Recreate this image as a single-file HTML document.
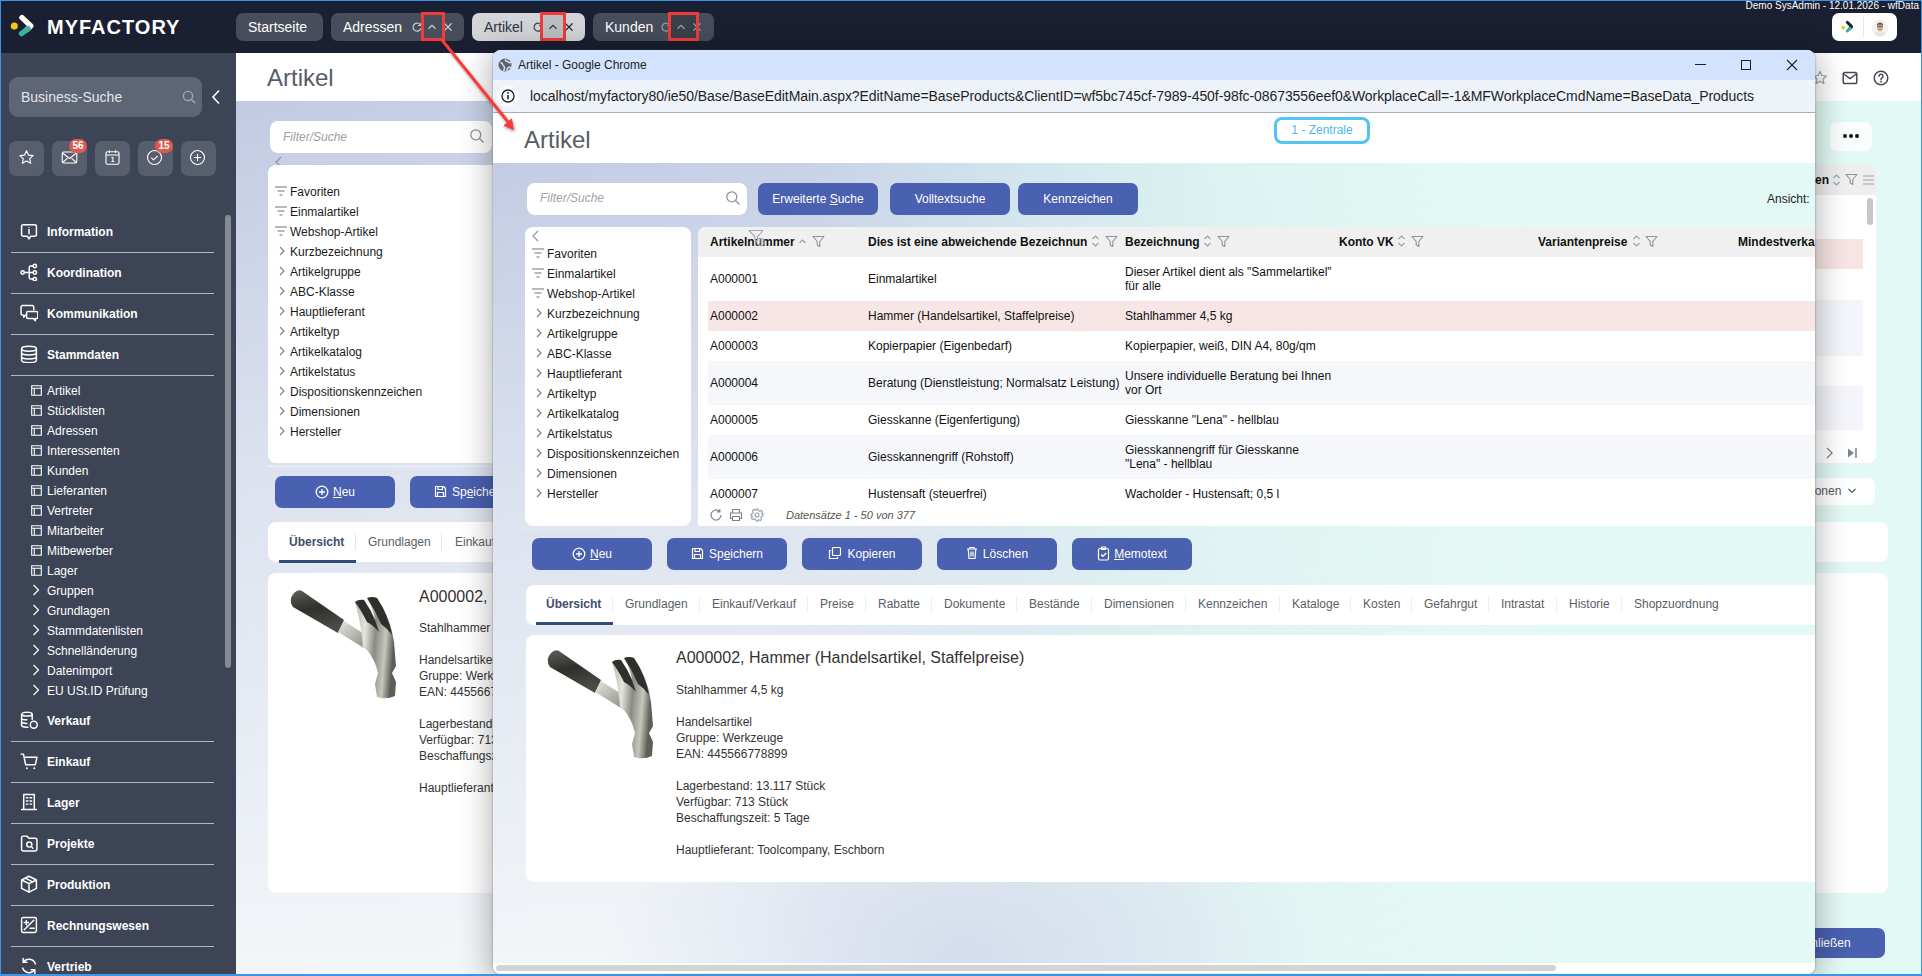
<!DOCTYPE html>
<html><head><meta charset="utf-8">
<style>
*{box-sizing:border-box;margin:0;padding:0}
html,body{width:1922px;height:976px;overflow:hidden;background:#fff}
body{position:relative;font-family:"Liberation Sans",sans-serif;font-size:12px;color:#222}
.a{position:absolute}
.nw{white-space:nowrap}
/* top header */
#hdr{left:0;top:0;width:1922px;height:53px;background:#1a2031}
.tab{position:absolute;top:13px;height:28px;border-radius:7px;background:#474d5b;color:#fff;font-size:14px;line-height:28px}
.redbox{position:absolute;border:3px solid #ef3b3b}
/* sidebar */
#side{left:0;top:53px;width:236px;height:923px;background:#3c4455}
.navh{position:absolute;left:47px;color:#fff;font-weight:bold;font-size:12px}
.sep{position:absolute;left:11px;width:203px;height:1px;background:#b3b7bf}
.sub{position:absolute;left:47px;color:#fff;font-size:12px}
/* background app */
#bg{left:236px;top:53px;width:1686px;height:923px;overflow:hidden;background:linear-gradient(90deg,#c3cce3 0%,#cdd8e8 40%,#d9f0ef 75%,#e1f8f3 100%)}
.panel{position:absolute;background:#fff;border-radius:8px}
.btn{position:absolute;height:32px;width:120px;border-radius:7px;background:#4a60b0;color:#fff;font-size:12px;line-height:32px;text-align:center}
/* popup */
#pop{left:493px;top:50px;width:1322px;height:924px;background:#fff;border-radius:8px 8px 8px 8px;overflow:hidden;box-shadow:0 0 2px 0 rgba(60,64,70,.6),0 4px 30px 3px rgba(0,0,0,.3)}
</style></head><body>

<div id="hdr" class="a">
 <svg class="a" style="left:8px;top:12px" width="30" height="30" viewBox="0 0 30 30">
  <circle cx="6.3" cy="14" r="3.5" fill="#f5c518"/>
  <path d="M14 5.6 L22.8 14 L19 17.4" stroke="#fff" stroke-width="5.4" stroke-linecap="round" stroke-linejoin="round" fill="none"/>
  <path d="M20 16.6 L13.6 21.6" stroke="#3bb0a4" stroke-width="5.4" stroke-linecap="round" fill="none"/>
 </svg>
 <div class="a nw" style="left:47px;top:15px;font-size:20px;font-weight:bold;color:#fff;letter-spacing:1.0px;line-height:24px">MYFACTORY</div>
 <div class="tab" style="left:236px;width:87px;padding-left:12px">Startseite</div>
 <div class="tab" style="left:331px;width:133px;padding-left:12px">Adressen</div>
 <div class="tab" style="left:472px;width:113px;padding-left:12px;background:#d3d4d8;color:#2e3442">Artikel</div>
 <div class="tab" style="left:593px;width:121px;padding-left:12px">Kunden</div>
 <div class="a" style="left:540px;top:12px;width:25px;height:28px;background:rgba(0,0,0,.1)"></div>
 <div class="a" style="left:668px;top:12px;width:31px;height:28px;background:rgba(0,0,0,.18)"></div>
 <svg class="a" style="left:411px;top:21px" width="12" height="12" viewBox="0 0 12 12"><path d="M9.6 4.3A4 4 0 1 0 9.9 7.3" stroke="#c8cbd1" stroke-width="1.2" fill="none"/><path d="M10 1.6v2.9H7.1" stroke="#c8cbd1" stroke-width="1.2" fill="none"/></svg>
 <svg class="a" style="left:426px;top:21px" width="12" height="12" viewBox="0 0 12 12"><path d="M2.5 7.8L6 4.3l3.5 3.5" stroke="#c8cbd1" stroke-width="1.3" fill="none"/></svg>
 <svg class="a" style="left:442px;top:21px" width="12" height="12" viewBox="0 0 12 12"><path d="M2.4 2.4l7.2 7.2M9.6 2.4l-7.2 7.2" stroke="#d5d8dd" stroke-width="1.3"/></svg>

 <svg class="a" style="left:532px;top:21px" width="12" height="12" viewBox="0 0 12 12"><path d="M9.6 4.3A4 4 0 1 0 9.9 7.3" stroke="#3a3f4a" stroke-width="1.2" fill="none"/><path d="M10 1.6v2.9H7.1" stroke="#3a3f4a" stroke-width="1.2" fill="none"/></svg>
 <svg class="a" style="left:547px;top:21px" width="12" height="12" viewBox="0 0 12 12"><path d="M2.5 7.8L6 4.3l3.5 3.5" stroke="#3a3f4a" stroke-width="1.3" fill="none"/></svg>
 <svg class="a" style="left:563px;top:21px" width="12" height="12" viewBox="0 0 12 12"><path d="M2.4 2.4l7.2 7.2M9.6 2.4l-7.2 7.2" stroke="#1c1f26" stroke-width="1.3"/></svg>

 <svg class="a" style="left:660px;top:21px" width="12" height="12" viewBox="0 0 12 12"><path d="M9.6 4.3A4 4 0 1 0 9.9 7.3" stroke="#9aa0a9" stroke-width="1.2" fill="none"/><path d="M10 1.6v2.9H7.1" stroke="#9aa0a9" stroke-width="1.2" fill="none"/></svg>
 <svg class="a" style="left:675px;top:21px" width="12" height="12" viewBox="0 0 12 12"><path d="M2.5 7.8L6 4.3l3.5 3.5" stroke="#9aa0a9" stroke-width="1.3" fill="none"/></svg>
 <svg class="a" style="left:691px;top:21px" width="12" height="12" viewBox="0 0 12 12"><path d="M2.4 2.4l7.2 7.2M9.6 2.4l-7.2 7.2" stroke="#9aa0a9" stroke-width="1.3"/></svg>
 <div class="redbox" style="left:421px;top:12px;width:24px;height:29px"></div>
 <div class="redbox" style="left:540px;top:12px;width:26px;height:29px"></div>
 <div class="redbox" style="left:668px;top:12px;width:31px;height:29px"></div>
 <div class="a nw" style="right:3px;top:0px;font-size:10px;color:#fff;line-height:12px">Demo SysAdmin - 12.01.2026 - wfData</div>
 <div class="a" style="left:1832px;top:13px;width:65px;height:28px;background:#fff;border-radius:7px"></div>
 <div class="a" style="left:1863px;top:17px;width:1px;height:20px;background:#e4e4e4"></div>
 <svg class="a" style="left:1840px;top:19px" width="16" height="16" viewBox="0 0 16 16">
  <circle cx="3.2" cy="8.6" r="1.9" fill="#f5c518"/>
  <path d="M7.3 3.3 L11.6 7.6 L9.6 9.6" stroke="#1a2031" stroke-width="3" stroke-linecap="round" stroke-linejoin="round" fill="none"/>
  <path d="M10 9.3 L7.3 11.9" stroke="#3bb0a4" stroke-width="3" stroke-linecap="round" fill="none"/>
 </svg>
 <svg class="a" style="left:1871px;top:19px" width="18" height="18" viewBox="0 0 18 18">
  <circle cx="9" cy="9" r="8.5" fill="#f3f3f2"/>
  <path d="M3.5 15.5 Q4.5 12 9 12 Q13.5 12 14.5 15.5 Q12 17.6 9 17.6 Q6 17.6 3.5 15.5Z" fill="#e8e4e0"/>
  <ellipse cx="9" cy="8" rx="3" ry="3.9" fill="#c9a08a"/>
  <path d="M5.9 6.6 Q6 3.4 9 3.5 Q12 3.4 12.1 6.6 Q10.6 5.2 9 5.4 Q7.4 5.2 5.9 6.6Z" fill="#6e5a4c"/>
  <path d="M6.2 7.3h5.6" stroke="#4a4038" stroke-width=".7"/>
 </svg>
</div>
<div id="side" class="a">
<div class="a" style="left:9px;top:24px;width:193px;height:40px;border-radius:9px;background:#5e6575"></div>
<div class="a nw" style="left:21px;top:35px;font-size:14px;color:#e3e5ea;line-height:18px">Business-Suche</div>
<svg class="a" style="left:182px;top:37px" width="14" height="14" viewBox="0 0 14 14"><circle cx="6" cy="6" r="4.6" stroke="#a5aab3" stroke-width="1.3" fill="none"/><path d="M9.4 9.4l3.6 3.6" stroke="#a5aab3" stroke-width="1.3"/></svg>
<svg class="a" style="left:210px;top:36px" width="12" height="16" viewBox="0 0 12 16"><path d="M9 1.5L3 8l6 6.5" stroke="#fff" stroke-width="1.6" fill="none"/></svg>
<div class="a" style="left:9px;top:88px;width:35px;height:35px;border-radius:7px;background:#575e6d"></div>
<div class="a" style="left:52px;top:88px;width:35px;height:35px;border-radius:7px;background:#575e6d"></div>
<div class="a" style="left:95px;top:88px;width:35px;height:35px;border-radius:7px;background:#575e6d"></div>
<div class="a" style="left:138px;top:88px;width:35px;height:35px;border-radius:7px;background:#575e6d"></div>
<div class="a" style="left:181px;top:88px;width:35px;height:35px;border-radius:7px;background:#575e6d"></div>
<svg class="a" style="left:18px;top:96px" width="17" height="17" viewBox="0 0 17 17"><path d="M8.5 1.8l2 4.3 4.6.5-3.4 3.1 1 4.6-4.2-2.4-4.2 2.4 1-4.6-3.4-3.1 4.6-.5z" stroke="#fff" stroke-width="1.1" fill="none" stroke-linejoin="round"/></svg>
<svg class="a" style="left:61px;top:97px" width="17" height="15" viewBox="0 0 17 15"><rect x="1.2" y="2" width="14.6" height="11" rx="1.5" stroke="#fff" stroke-width="1.1" fill="none" stroke-linejoin="round"/><path d="M1.5 3l7 5.5 7-5.5M1.5 12.5l5-4.2M15.5 12.5l-5-4.2" stroke="#fff" stroke-width="1.1" fill="none" stroke-linejoin="round"/></svg>
<svg class="a" style="left:104px;top:96px" width="17" height="17" viewBox="0 0 17 17"><rect x="2" y="2.8" width="13" height="12.5" rx="1.5" stroke="#fff" stroke-width="1.1" fill="none" stroke-linejoin="round"/><path d="M2 6h13M5.5 1.2v2.8M11.5 1.2v2.8" stroke="#fff" stroke-width="1.1" fill="none" stroke-linejoin="round"/><text x="8.5" y="13.3" font-size="6.5" font-family="Liberation Sans" font-weight="bold" fill="#fff" text-anchor="middle">1</text></svg>
<svg class="a" style="left:146px;top:96px" width="17" height="17" viewBox="0 0 17 17"><circle cx="8.5" cy="8.5" r="7" stroke="#fff" stroke-width="1.1" fill="none" stroke-linejoin="round"/><path d="M5.3 8.7l2.2 2.1 4.2-4" stroke="#fff" stroke-width="1.1" fill="none" stroke-linejoin="round"/></svg>
<svg class="a" style="left:189px;top:96px" width="17" height="17" viewBox="0 0 17 17"><circle cx="8.5" cy="8.5" r="7" stroke="#fff" stroke-width="1.1" fill="none" stroke-linejoin="round"/><path d="M8.5 5v7M5 8.5h7" stroke="#fff" stroke-width="1.1" fill="none" stroke-linejoin="round"/></svg>
<div class="a" style="left:69px;top:86px;width:18px;height:14px;border-radius:7px;background:#de5a50;color:#fff;font-size:10px;font-weight:bold;line-height:14px;text-align:center">56</div>
<div class="a" style="left:155px;top:86px;width:18px;height:14px;border-radius:7px;background:#de5a50;color:#fff;font-size:10px;font-weight:bold;line-height:14px;text-align:center">15</div>
<div class="a" style="left:225px;top:162px;width:6px;height:453px;border-radius:3px;background:#858a94"></div>
<div class="navh nw" style="top:171px;line-height:16px">Information</div>
<svg class="a" style="left:20px;top:169px" width="18" height="18" viewBox="0 0 17 17"><path d="M3 2.5h11a1.5 1.5 0 0 1 1.5 1.5v8a1.5 1.5 0 0 1-1.5 1.5h-4l-1.5 2.5-1.5-2.5h-4a1.5 1.5 0 0 1-1.5-1.5v-8a1.5 1.5 0 0 1 1.5-1.5z" stroke="#fff" stroke-width="1.4" fill="none" stroke-linecap="round" stroke-linejoin="round"/><path d="M8.5 7v4" stroke="#fff" stroke-width="1.4" fill="none" stroke-linecap="round" stroke-linejoin="round"/><circle cx="8.5" cy="5" r="0.6" fill="#fff"/></svg>
<div class="navh nw" style="top:212px;line-height:16px">Koordination</div>
<svg class="a" style="left:20px;top:210px" width="18" height="18" viewBox="0 0 17 17"><circle cx="2.5" cy="9" r="1.6" stroke="#fff" stroke-width="1.4" fill="none" stroke-linecap="round" stroke-linejoin="round"/><circle cx="14" cy="2.8" r="1.6" stroke="#fff" stroke-width="1.4" fill="none" stroke-linecap="round" stroke-linejoin="round"/><circle cx="14" cy="9" r="1.6" stroke="#fff" stroke-width="1.4" fill="none" stroke-linecap="round" stroke-linejoin="round"/><circle cx="14" cy="15.2" r="1.6" stroke="#fff" stroke-width="1.4" fill="none" stroke-linecap="round" stroke-linejoin="round"/><path d="M4.1 9h8.3M12.4 2.8h-2.2a1.5 1.5 0 0 0-1.5 1.5v9.4a1.5 1.5 0 0 0 1.5 1.5h2.2" stroke="#fff" stroke-width="1.4" fill="none" stroke-linecap="round" stroke-linejoin="round"/></svg>
<div class="navh nw" style="top:253px;line-height:16px">Kommunikation</div>
<svg class="a" style="left:20px;top:251px" width="18" height="18" viewBox="0 0 17 17"><path d="M2.5 1.5h9a1.5 1.5 0 0 1 1.5 1.5v2.5M6 10.5h-1l-1.5 2v-2h-1a1.5 1.5 0 0 1-1.5-1.5v-6a1.5 1.5 0 0 1 1.5-1.5" stroke="#fff" stroke-width="1.4" fill="none" stroke-linecap="round" stroke-linejoin="round"/><path d="M7.5 7h8a1.3 1.3 0 0 1 1.3 1.3v4.2a1.3 1.3 0 0 1-1.3 1.3h-1v2l-1.8-2h-5.2a1.3 1.3 0 0 1-1.3-1.3v-4.2a1.3 1.3 0 0 1 1.3-1.3z" stroke="#fff" stroke-width="1.4" fill="none" stroke-linecap="round" stroke-linejoin="round"/></svg>
<div class="navh nw" style="top:294px;line-height:16px">Stammdaten</div>
<svg class="a" style="left:20px;top:292px" width="18" height="18" viewBox="0 0 17 17"><ellipse cx="8.5" cy="3.5" rx="7" ry="2.3" stroke="#fff" stroke-width="1.4" fill="none" stroke-linecap="round" stroke-linejoin="round"/><path d="M1.5 3.5v11c0 1.3 3.1 2.3 7 2.3s7-1 7-2.3v-11M1.5 7.2c0 1.3 3.1 2.3 7 2.3s7-1 7-2.3M1.5 10.9c0 1.3 3.1 2.3 7 2.3s7-1 7-2.3" stroke="#fff" stroke-width="1.4" fill="none" stroke-linecap="round" stroke-linejoin="round"/></svg>
<div class="navh nw" style="top:660px;line-height:16px">Verkauf</div>
<svg class="a" style="left:20px;top:658px" width="18" height="18" viewBox="0 0 17 17"><ellipse cx="6.5" cy="3" rx="5" ry="1.8" stroke="#fff" stroke-width="1.4" fill="none" stroke-linecap="round" stroke-linejoin="round"/><path d="M1.5 3v10.5c0 1 2.2 1.8 5 1.8h1M11.5 3v5M1.5 6.5c0 1 2.2 1.8 5 1.8M1.5 10c0 1 2.2 1.8 5 1.8" stroke="#fff" stroke-width="1.4" fill="none" stroke-linecap="round" stroke-linejoin="round"/><circle cx="13" cy="13" r="3.3" stroke="#fff" stroke-width="1.4" fill="none" stroke-linecap="round" stroke-linejoin="round"/></svg>
<div class="navh nw" style="top:701px;line-height:16px">Einkauf</div>
<svg class="a" style="left:20px;top:699px" width="18" height="18" viewBox="0 0 17 17"><path d="M1 2h2.3l2 10h9.2l1.5-7H4.2" stroke="#fff" stroke-width="1.4" fill="none" stroke-linecap="round" stroke-linejoin="round"/><circle cx="6.5" cy="15.3" r="0.9" fill="#fff"/><circle cx="13.5" cy="15.3" r="0.9" fill="#fff"/></svg>
<div class="navh nw" style="top:742px;line-height:16px">Lager</div>
<svg class="a" style="left:20px;top:740px" width="18" height="18" viewBox="0 0 17 17"><path d="M3.5 1.5h10v14h-10zM1.5 15.5h14" stroke="#fff" stroke-width="1.4" fill="none" stroke-linecap="round" stroke-linejoin="round"/><path d="M6 4.5h1.5M9.5 4.5H11M6 7.5h1.5M9.5 7.5H11M6 10.5h1.5M9.5 10.5H11" stroke="#fff" stroke-width="1.4" fill="none" stroke-linecap="round" stroke-linejoin="round"/></svg>
<div class="navh nw" style="top:783px;line-height:16px">Projekte</div>
<svg class="a" style="left:20px;top:781px" width="18" height="18" viewBox="0 0 17 17"><path d="M1.5 3.5a1.5 1.5 0 0 1 1.5-1.5h3.5l2 2h6a1.5 1.5 0 0 1 1.5 1.5v9a1.5 1.5 0 0 1-1.5 1.5H3a1.5 1.5 0 0 1-1.5-1.5z" stroke="#fff" stroke-width="1.4" fill="none" stroke-linecap="round" stroke-linejoin="round"/><circle cx="8.8" cy="10" r="2.4" stroke="#fff" stroke-width="1.4" fill="none" stroke-linecap="round" stroke-linejoin="round"/><path d="M10.5 11.8l1.6 1.6" stroke="#fff" stroke-width="1.4" fill="none" stroke-linecap="round" stroke-linejoin="round"/></svg>
<div class="navh nw" style="top:824px;line-height:16px">Produktion</div>
<svg class="a" style="left:20px;top:822px" width="18" height="18" viewBox="0 0 17 17"><path d="M8.5 1.2l7 3.5v8l-7 3.5-7-3.5v-8z M1.5 4.7l7 3.5 7-3.5 M8.5 8.2v8.5 M5 3l7 3.5" stroke="#fff" stroke-width="1.4" fill="none" stroke-linecap="round" stroke-linejoin="round"/></svg>
<div class="navh nw" style="top:865px;line-height:16px">Rechnungswesen</div>
<svg class="a" style="left:20px;top:863px" width="18" height="18" viewBox="0 0 17 17"><rect x="1.5" y="1.5" width="14" height="14" rx="1.5" stroke="#fff" stroke-width="1.4" fill="none" stroke-linecap="round" stroke-linejoin="round"/><path d="M4 13L13 4M4 6.2h4M6 4.2v4M9.5 11.5h4" stroke="#fff" stroke-width="1.4" fill="none" stroke-linecap="round" stroke-linejoin="round"/></svg>
<div class="navh nw" style="top:906px;line-height:16px">Vertrieb</div>
<svg class="a" style="left:20px;top:904px" width="18" height="18" viewBox="0 0 17 17"><path d="M14.5 6.5A6.5 6.5 0 0 0 3 5M2.5 10.5A6.5 6.5 0 0 0 14 12M3 1.5V5h3.5M14 15.5V12h-3.5" stroke="#fff" stroke-width="1.4" fill="none" stroke-linecap="round" stroke-linejoin="round"/></svg>
<div class="sep" style="top:199px"></div>
<div class="sep" style="top:240px"></div>
<div class="sep" style="top:281px"></div>
<div class="sep" style="top:322px"></div>
<div class="sep" style="top:688px"></div>
<div class="sep" style="top:729px"></div>
<div class="sep" style="top:770px"></div>
<div class="sep" style="top:811px"></div>
<div class="sep" style="top:852px"></div>
<div class="sep" style="top:893px"></div>
<div class="sub nw" style="top:330px;line-height:16px">Artikel</div>
<svg class="a" style="left:31px;top:332px" width="11" height="11" viewBox="0 0 11 11"><path d="M.7.7h9.6v9.6H.7zM.7 3.3h9.6M3.3 3.3v7" stroke="#fff" stroke-width="1.1" fill="none"/></svg>
<div class="sub nw" style="top:350px;line-height:16px">Stücklisten</div>
<svg class="a" style="left:31px;top:352px" width="11" height="11" viewBox="0 0 11 11"><path d="M.7.7h9.6v9.6H.7zM.7 3.3h9.6M3.3 3.3v7" stroke="#fff" stroke-width="1.1" fill="none"/></svg>
<div class="sub nw" style="top:370px;line-height:16px">Adressen</div>
<svg class="a" style="left:31px;top:372px" width="11" height="11" viewBox="0 0 11 11"><path d="M.7.7h9.6v9.6H.7zM.7 3.3h9.6M3.3 3.3v7" stroke="#fff" stroke-width="1.1" fill="none"/></svg>
<div class="sub nw" style="top:390px;line-height:16px">Interessenten</div>
<svg class="a" style="left:31px;top:392px" width="11" height="11" viewBox="0 0 11 11"><path d="M.7.7h9.6v9.6H.7zM.7 3.3h9.6M3.3 3.3v7" stroke="#fff" stroke-width="1.1" fill="none"/></svg>
<div class="sub nw" style="top:410px;line-height:16px">Kunden</div>
<svg class="a" style="left:31px;top:412px" width="11" height="11" viewBox="0 0 11 11"><path d="M.7.7h9.6v9.6H.7zM.7 3.3h9.6M3.3 3.3v7" stroke="#fff" stroke-width="1.1" fill="none"/></svg>
<div class="sub nw" style="top:430px;line-height:16px">Lieferanten</div>
<svg class="a" style="left:31px;top:432px" width="11" height="11" viewBox="0 0 11 11"><path d="M.7.7h9.6v9.6H.7zM.7 3.3h9.6M3.3 3.3v7" stroke="#fff" stroke-width="1.1" fill="none"/></svg>
<div class="sub nw" style="top:450px;line-height:16px">Vertreter</div>
<svg class="a" style="left:31px;top:452px" width="11" height="11" viewBox="0 0 11 11"><path d="M.7.7h9.6v9.6H.7zM.7 3.3h9.6M3.3 3.3v7" stroke="#fff" stroke-width="1.1" fill="none"/></svg>
<div class="sub nw" style="top:470px;line-height:16px">Mitarbeiter</div>
<svg class="a" style="left:31px;top:472px" width="11" height="11" viewBox="0 0 11 11"><path d="M.7.7h9.6v9.6H.7zM.7 3.3h9.6M3.3 3.3v7" stroke="#fff" stroke-width="1.1" fill="none"/></svg>
<div class="sub nw" style="top:490px;line-height:16px">Mitbewerber</div>
<svg class="a" style="left:31px;top:492px" width="11" height="11" viewBox="0 0 11 11"><path d="M.7.7h9.6v9.6H.7zM.7 3.3h9.6M3.3 3.3v7" stroke="#fff" stroke-width="1.1" fill="none"/></svg>
<div class="sub nw" style="top:510px;line-height:16px">Lager</div>
<svg class="a" style="left:31px;top:512px" width="11" height="11" viewBox="0 0 11 11"><path d="M.7.7h9.6v9.6H.7zM.7 3.3h9.6M3.3 3.3v7" stroke="#fff" stroke-width="1.1" fill="none"/></svg>
<div class="sub nw" style="top:530px;line-height:16px">Gruppen</div>
<svg class="a" style="left:32px;top:531px" width="8" height="12" viewBox="0 0 8 12"><path d="M1.5 1l5 5-5 5" stroke="#fff" stroke-width="1.2" fill="none"/></svg>
<div class="sub nw" style="top:550px;line-height:16px">Grundlagen</div>
<svg class="a" style="left:32px;top:551px" width="8" height="12" viewBox="0 0 8 12"><path d="M1.5 1l5 5-5 5" stroke="#fff" stroke-width="1.2" fill="none"/></svg>
<div class="sub nw" style="top:570px;line-height:16px">Stammdatenlisten</div>
<svg class="a" style="left:32px;top:571px" width="8" height="12" viewBox="0 0 8 12"><path d="M1.5 1l5 5-5 5" stroke="#fff" stroke-width="1.2" fill="none"/></svg>
<div class="sub nw" style="top:590px;line-height:16px">Schnelländerung</div>
<svg class="a" style="left:32px;top:591px" width="8" height="12" viewBox="0 0 8 12"><path d="M1.5 1l5 5-5 5" stroke="#fff" stroke-width="1.2" fill="none"/></svg>
<div class="sub nw" style="top:610px;line-height:16px">Datenimport</div>
<svg class="a" style="left:32px;top:611px" width="8" height="12" viewBox="0 0 8 12"><path d="M1.5 1l5 5-5 5" stroke="#fff" stroke-width="1.2" fill="none"/></svg>
<div class="sub nw" style="top:630px;line-height:16px">EU USt.ID Prüfung</div>
<svg class="a" style="left:32px;top:631px" width="8" height="12" viewBox="0 0 8 12"><path d="M1.5 1l5 5-5 5" stroke="#fff" stroke-width="1.2" fill="none"/></svg>
</div>
<!--BG-->
<div class="a" style="left:236px;top:53px;width:1686px;height:48px;background:#fff"></div>
<div class="a" style="left:236px;top:101px;width:1686px;height:875px;background:linear-gradient(90deg,#c3cbe3 0%,#c9d2e7 20%,#d3e5ec 45%,#dcf3f1 62%,#e1f8f3 80%,#e3f9f5 100%)"></div>
<div class="a" style="left:236px;top:101px;width:1100px;height:875px;background:linear-gradient(180deg,rgba(243,247,249,0) 0%,rgba(243,247,249,.55) 45%,rgba(243,247,249,.97) 100%);-webkit-mask-image:linear-gradient(90deg,#000 0%,#000 25%,rgba(0,0,0,.4) 60%,rgba(0,0,0,0) 100%)"></div>
<div class="a nw" style="left:267px;top:64px;font-size:24px;line-height:28px;color:#575c66">Artikel</div>
<svg class="a" style="left:1812px;top:70px" width="16" height="16" viewBox="0 0 16 16"><path d="M8 1.5l1.9 4 4.4.5-3.3 3 .9 4.4L8 11.2l-3.9 2.2.9-4.4-3.3-3 4.4-.5z" stroke="#9aa0a8" stroke-width="1.2" fill="none" stroke-linejoin="round"/></svg>
<svg class="a" style="left:1842px;top:70px" width="16" height="16" viewBox="0 0 16 16"><rect x="1.2" y="2.5" width="13.6" height="11" rx="1.8" stroke="#444b57" stroke-width="1.5" fill="none" stroke-linejoin="round" stroke-linecap="round"/><path d="M1.8 4l6.2 4.6L14.2 4" stroke="#444b57" stroke-width="1.5" fill="none" stroke-linejoin="round" stroke-linecap="round"/></svg>
<svg class="a" style="left:1873px;top:70px" width="16" height="16" viewBox="0 0 16 16"><circle cx="8" cy="8" r="6.8" stroke="#444b57" stroke-width="1.5" fill="none" stroke-linejoin="round" stroke-linecap="round"/><path d="M6 6.2a2 2 0 1 1 2.6 1.9c-.5.2-.6.5-.6 1v.7" stroke="#444b57" stroke-width="1.5" fill="none" stroke-linejoin="round" stroke-linecap="round"/><circle cx="8" cy="11.8" r=".5" fill="#444b57" stroke="#444b57"/></svg>
<div class="a" style="left:1830px;top:122px;width:42px;height:29px;border-radius:7px;background:rgba(255,255,255,.8)"></div>
<div class="a" style="left:1843px;top:134px;width:4px;height:4px;border-radius:2px;background:#111;box-shadow:6px 0 0 #111,12px 0 0 #111"></div>
<div class="panel" style="left:270px;top:121px;width:222px;height:32px;border-radius:8px"></div>
<div class="a nw" style="left:283px;top:130px;font-size:12px;line-height:15px;color:#9a9ea5;font-style:italic">Filter/Suche</div>
<svg class="a" style="left:469px;top:128px" width="16" height="16" viewBox="0 0 16 16"><circle cx="6.8" cy="6.8" r="5" stroke="#8e939b" stroke-width="1.3" fill="none"/><path d="M10.5 10.5l4 4" stroke="#8e939b" stroke-width="1.3"/></svg>
<svg class="a" style="left:274px;top:155px" width="10" height="14" viewBox="0 0 10 14"><path d="M7 2L2 7l5 5" stroke="#8d94a3" stroke-width="1.2" fill="none"/></svg>
<div class="panel" style="left:268px;top:165px;width:260px;height:298px"></div>
<div class="a" style="left:268px;top:466px;width:260px;height:0;border-top:1px dotted #fff"></div>
<div class="a nw" style="left:290px;top:184px;font-size:12px;line-height:16px;color:#1b1b1b">Favoriten</div>
<svg class="a" style="left:274px;top:185px" width="14" height="12" viewBox="0 0 14 12"><path d="M1 2h12M3.5 6h7M5.5 10h3" stroke="#9da1a8" stroke-width="1.3"/></svg>
<div class="a nw" style="left:290px;top:204px;font-size:12px;line-height:16px;color:#1b1b1b">Einmalartikel</div>
<svg class="a" style="left:274px;top:205px" width="14" height="12" viewBox="0 0 14 12"><path d="M1 2h12M3.5 6h7M5.5 10h3" stroke="#9da1a8" stroke-width="1.3"/></svg>
<div class="a nw" style="left:290px;top:224px;font-size:12px;line-height:16px;color:#1b1b1b">Webshop-Artikel</div>
<svg class="a" style="left:274px;top:225px" width="14" height="12" viewBox="0 0 14 12"><path d="M1 2h12M3.5 6h7M5.5 10h3" stroke="#9da1a8" stroke-width="1.3"/></svg>
<div class="a nw" style="left:290px;top:244px;font-size:12px;line-height:16px;color:#1b1b1b">Kurzbezeichnung</div>
<svg class="a" style="left:278px;top:245px" width="8" height="12" viewBox="0 0 8 12"><path d="M2 2l4 4-4 4" stroke="#777c84" stroke-width="1.1" fill="none"/></svg>
<div class="a nw" style="left:290px;top:264px;font-size:12px;line-height:16px;color:#1b1b1b">Artikelgruppe</div>
<svg class="a" style="left:278px;top:265px" width="8" height="12" viewBox="0 0 8 12"><path d="M2 2l4 4-4 4" stroke="#777c84" stroke-width="1.1" fill="none"/></svg>
<div class="a nw" style="left:290px;top:284px;font-size:12px;line-height:16px;color:#1b1b1b">ABC-Klasse</div>
<svg class="a" style="left:278px;top:285px" width="8" height="12" viewBox="0 0 8 12"><path d="M2 2l4 4-4 4" stroke="#777c84" stroke-width="1.1" fill="none"/></svg>
<div class="a nw" style="left:290px;top:304px;font-size:12px;line-height:16px;color:#1b1b1b">Hauptlieferant</div>
<svg class="a" style="left:278px;top:305px" width="8" height="12" viewBox="0 0 8 12"><path d="M2 2l4 4-4 4" stroke="#777c84" stroke-width="1.1" fill="none"/></svg>
<div class="a nw" style="left:290px;top:324px;font-size:12px;line-height:16px;color:#1b1b1b">Artikeltyp</div>
<svg class="a" style="left:278px;top:325px" width="8" height="12" viewBox="0 0 8 12"><path d="M2 2l4 4-4 4" stroke="#777c84" stroke-width="1.1" fill="none"/></svg>
<div class="a nw" style="left:290px;top:344px;font-size:12px;line-height:16px;color:#1b1b1b">Artikelkatalog</div>
<svg class="a" style="left:278px;top:345px" width="8" height="12" viewBox="0 0 8 12"><path d="M2 2l4 4-4 4" stroke="#777c84" stroke-width="1.1" fill="none"/></svg>
<div class="a nw" style="left:290px;top:364px;font-size:12px;line-height:16px;color:#1b1b1b">Artikelstatus</div>
<svg class="a" style="left:278px;top:365px" width="8" height="12" viewBox="0 0 8 12"><path d="M2 2l4 4-4 4" stroke="#777c84" stroke-width="1.1" fill="none"/></svg>
<div class="a nw" style="left:290px;top:384px;font-size:12px;line-height:16px;color:#1b1b1b">Dispositionskennzeichen</div>
<svg class="a" style="left:278px;top:385px" width="8" height="12" viewBox="0 0 8 12"><path d="M2 2l4 4-4 4" stroke="#777c84" stroke-width="1.1" fill="none"/></svg>
<div class="a nw" style="left:290px;top:404px;font-size:12px;line-height:16px;color:#1b1b1b">Dimensionen</div>
<svg class="a" style="left:278px;top:405px" width="8" height="12" viewBox="0 0 8 12"><path d="M2 2l4 4-4 4" stroke="#777c84" stroke-width="1.1" fill="none"/></svg>
<div class="a nw" style="left:290px;top:424px;font-size:12px;line-height:16px;color:#1b1b1b">Hersteller</div>
<svg class="a" style="left:278px;top:425px" width="8" height="12" viewBox="0 0 8 12"><path d="M2 2l4 4-4 4" stroke="#777c84" stroke-width="1.1" fill="none"/></svg>
<div class="btn" style="left:275px;top:476px;width:120px"><svg style="vertical-align:-3px;margin-right:4px" width="14" height="14" viewBox="0 0 14 14"><circle cx="7" cy="7" r="5.8" stroke="#fff" stroke-width="1.3" fill="none"/><path d="M7 4v6M4 7h6" stroke="#fff" stroke-width="1.3"/></svg><u>N</u>eu</div>
<div class="btn" style="left:410px;top:476px;width:120px"><svg style="vertical-align:-2px;margin-right:5px" width="13" height="13" viewBox="0 0 13 13"><path d="M1.5 1.5h8l2 2v8h-10z M4 1.5v3h4.5v-3 M3.5 11.5v-4h6v4" stroke="#fff" stroke-width="1.2" fill="none" stroke-linejoin="round"/></svg>Sp<u>e</u>ichern</div>
<div class="panel" style="left:268px;top:522px;width:1620px;height:40px"></div>
<div class="a nw" style="left:289px;top:534px;font-size:12px;line-height:16px;color:#3e4e6c;font-weight:bold">Übersicht</div>
<div class="a" style="left:355px;top:533px;width:1px;height:17px;background:#e3e5e8"></div>
<div class="a nw" style="left:368px;top:534px;font-size:12px;line-height:16px;color:#5a5e66">Grundlagen</div>
<div class="a" style="left:441px;top:533px;width:1px;height:17px;background:#e3e5e8"></div>
<div class="a nw" style="left:455px;top:534px;font-size:12px;line-height:16px;color:#5a5e66">Einkauf/Verkauf</div>
<div class="a" style="left:279px;top:560px;width:77px;height:3px;background:#2f4d78"></div>
<div class="panel" style="left:268px;top:573px;width:1620px;height:320px"></div>
<svg class="a" style="left:283px;top:580px" width="130.0" height="130.0" viewBox="0 0 130 130">
<defs>
<linearGradient id="hbg1" x1="0" y1="0" x2="0.3" y2="1"><stop offset="0" stop-color="#5f6058"/><stop offset="0.5" stop-color="#2f302b"/><stop offset="1" stop-color="#4a4b43"/></linearGradient>
<linearGradient id="hbg2" x1="0" y1="0" x2="1" y2="0.2"><stop offset="0" stop-color="#b5b6ae"/><stop offset="0.3" stop-color="#e4e4de"/><stop offset="0.55" stop-color="#8a8b82"/><stop offset="0.8" stop-color="#c6c6bf"/><stop offset="1" stop-color="#5d5e55"/></linearGradient>
<linearGradient id="hbg3" x1="0" y1="0" x2="1" y2="1"><stop offset="0" stop-color="#e6e6e0"/><stop offset="1" stop-color="#8a8b82"/></linearGradient>
</defs>
<path d="M11 13 Q5 20 10 27 L55 53 L61 40 L19 11 Q15 9 11 13 Z" fill="url(#hbg1)"/>
<path d="M55 52 L61 41 L86 57 L81 68 Z" fill="url(#hbg3)"/>
<path d="M72 22 Q76 19 81 20 Q88 30 92 40 Q90 28 84 18 Q89 16 94 18 Q108 38 111 62 L113 86 L109 93 L113 102 L112 116 Q103 120 94 117 L92 104 L95 93 L93 86 Q88 72 80 67 Q78 42 72 22 Z" fill="url(#hbg2)"/>
<path d="M72 22 Q76 19 81 20 Q88 30 92 40 L96 52 Q90 45 84 42 Q78 30 72 22 Z" fill="#2f302b"/>
<path d="M84 18 Q89 16 94 18 Q106 36 109 55 Q104 48 98 44 Q92 30 84 18 Z" fill="#2f302b"/>
</svg>
<div class="a nw" style="left:419px;top:587px;font-size:16px;line-height:19px;color:#333">A000002, Hammer (Handelsartikel, Staffelpreise)</div>
<div class="a nw" style="left:419px;top:620px;font-size:12px;line-height:16px;color:#333">Stahlhammer 4,5 kg</div>
<div class="a nw" style="left:419px;top:652px;font-size:12px;line-height:16px;color:#333">Handelsartikel</div>
<div class="a nw" style="left:419px;top:668px;font-size:12px;line-height:16px;color:#333">Gruppe: Werkzeuge</div>
<div class="a nw" style="left:419px;top:684px;font-size:12px;line-height:16px;color:#333">EAN: 445566778899</div>
<div class="a nw" style="left:419px;top:716px;font-size:12px;line-height:16px;color:#333">Lagerbestand: 13.117 Stück</div>
<div class="a nw" style="left:419px;top:732px;font-size:12px;line-height:16px;color:#333">Verfügbar: 713 Stück</div>
<div class="a nw" style="left:419px;top:748px;font-size:12px;line-height:16px;color:#333">Beschaffungszeit: 5 Tage</div>
<div class="a nw" style="left:419px;top:780px;font-size:12px;line-height:16px;color:#333">Hauptlieferant: Toolcompany, Eschborn</div>
<div class="panel" style="left:1500px;top:165px;width:376px;height:298px"></div>
<div class="a" style="left:1500px;top:165px;width:376px;height:30px;background:#eeeeee;border-radius:8px 8px 0 0"></div>
<div class="a" style="left:1500px;top:239px;width:363px;height:30px;background:#f7e4e4"></div>
<div class="a" style="left:1500px;top:300px;width:363px;height:56px;background:#f3f5fa"></div>
<div class="a" style="left:1500px;top:386px;width:363px;height:44px;background:#f3f5fa"></div>
<div class="a nw" style="left:1790px;top:172px;font-size:12px;line-height:16px;color:#111;font-weight:bold;text-align:right;width:39px">en</div>
<svg class="a" style="left:1832px;top:173px" width="9" height="14" viewBox="0 0 9 14"><path d="M1.5 5L4.5 2l3 3M1.5 9l3 3 3-3" stroke="#9a9ea5" stroke-width="1.1" fill="none"/></svg>
<svg class="a" style="left:1845px;top:173px" width="13" height="13" viewBox="0 0 13 13"><path d="M1 1.5h11L7.8 6.5v5L5.2 10V6.5z" stroke="#8e939b" stroke-width="1.1" fill="none" stroke-linejoin="round"/></svg>
<svg class="a" style="left:1862px;top:174px" width="13" height="12" viewBox="0 0 13 12"><path d="M1 2h11M1 6h11M1 10h11" stroke="#9da1a8" stroke-width="1.1"/></svg>
<div class="a" style="left:1867px;top:198px;width:6px;height:27px;border-radius:3px;background:#c6c7ca"></div>
<svg class="a" style="left:1824px;top:446px" width="10" height="14" viewBox="0 0 10 14"><path d="M3 2l5 5-5 5" stroke="#7e848e" stroke-width="1.3" fill="none"/></svg>
<svg class="a" style="left:1846px;top:446px" width="12" height="14" viewBox="0 0 12 14"><path d="M2 2.5l6 4.5-6 4.5z" fill="#7e848e"/><path d="M10 2v10" stroke="#7e848e" stroke-width="1.6"/></svg>
<div class="panel" style="left:1500px;top:478px;width:375px;height:27px;border-radius:7px"></div>
<div class="a nw" style="left:1812px;top:484px;font-size:12px;line-height:15px;color:#555a63"><u>i</u>onen</div>
<svg class="a" style="left:1847px;top:487px" width="10" height="8" viewBox="0 0 10 8"><path d="M1.5 2l3.5 3.5L8.5 2" stroke="#555a63" stroke-width="1.2" fill="none"/></svg>
<div class="btn" style="left:1763px;top:928px;width:122px;height:30px;line-height:30px">Schließen</div>
<!--/BG-->
<!--POP-->
<div id="pop" class="a">
<div class="a" style="left:0;top:0;width:1322px;height:30px;background:#d3e3fd"></div>
<svg class="a" style="left:5px;top:8px" width="14" height="14" viewBox="0 0 14 14"><circle cx="7" cy="7" r="6.5" fill="#5f6368"/><path d="M2.2 4.5c1.5.3 2.4 1 2.6 2.2.2 1 1.3 1.4 1.6 2.3.3.9-.2 2.2-.6 4.1M7.5 1.3c-.3 1 .3 1.8 1.4 2 1.2.3 1.4 1.3 2.4 1.4 1 .1 1.8-.4 2.4-.6M13 9.5c-1.2-.4-2.6-.2-3.4.7-.8.9-.6 2.2-.8 3.3" stroke="#d3e3fd" stroke-width="1.5" fill="none"/></svg>
<div class="a nw" style="left:25px;top:8px;font-size:12px;line-height:15px;color:#1f1f1f">Artikel - Google Chrome</div>
<div class="a" style="left:1202px;top:14px;width:11px;height:1px;background:#1f1f1f"></div>
<div class="a" style="left:1248px;top:10px;width:10px;height:10px;border:1px solid #1f1f1f"></div>
<svg class="a" style="left:1293px;top:9px" width="12" height="12" viewBox="0 0 12 12"><path d="M1 1l10 10M11 1L1 11" stroke="#1f1f1f" stroke-width="1.1"/></svg>
<div class="a" style="left:0;top:30px;width:1322px;height:33px;background:#eef2f9;border-bottom:1px solid #a9adb3"></div>
<div class="a" style="left:4px;top:35px;width:22px;height:22px;border-radius:11px;background:#f8f9fc"></div>
<svg class="a" style="left:8px;top:39px" width="14" height="14" viewBox="0 0 14 14"><circle cx="7" cy="7" r="6" stroke="#1f1f1f" stroke-width="1.3" fill="none"/><path d="M7 6v4.2" stroke="#1f1f1f" stroke-width="1.6"/><circle cx="7" cy="4" r=".9" fill="#1f1f1f"/></svg>
<div class="a nw" style="left:37px;top:38px;font-size:14px;line-height:17px;color:#1f1f1f;letter-spacing:-0.07px">localhost/myfactory80/ie50/Base/BaseEditMain.aspx?EditName=BaseProducts&amp;ClientID=wf5bc745cf-7989-450f-98fc-08673556eef0&amp;WorkplaceCall=-1&amp;MFWorkplaceCmdName=BaseData_Products</div>
<div class="a" style="left:0;top:63px;width:1322px;height:50px;background:#fff"></div>
<div class="a" style="left:0;top:113px;width:1322px;height:811px;background:linear-gradient(90deg,#c4cce4 0%,#c9d2e7 24%,#d3e8ee 42%,#dcf4f2 56%,#e3f9f5 75%,#e3f9f5 100%)"></div>
<div class="a" style="left:0;top:113px;width:1100px;height:811px;background:linear-gradient(180deg,rgba(243,247,249,0) 0%,rgba(243,247,249,.55) 45%,rgba(243,247,249,.97) 100%);-webkit-mask-image:linear-gradient(90deg,#000 0%,#000 25%,rgba(0,0,0,.4) 60%,rgba(0,0,0,0) 100%)"></div>
<div class="a" style="left:0;top:113px;width:1322px;height:811px;background:radial-gradient(ellipse 360px 200px at 470px 790px,rgba(210,218,235,.85),rgba(210,218,235,0))"></div>
<div class="a nw" style="left:31px;top:76px;font-size:24px;line-height:28px;color:#575c66">Artikel</div>
<div class="a nw" style="left:781px;top:67px;width:96px;height:27px;border:3px solid #52c4f2;border-radius:8px;color:#4db6ea;font-size:12px;line-height:21px;text-align:center">1 - Zentrale</div>
<div class="panel" style="left:34px;top:133px;width:220px;height:32px;border-radius:8px"></div>
<div class="a nw" style="left:47px;top:141px;font-size:12px;line-height:15px;color:#a0a4ab;font-style:italic">Filter/Suche</div>
<svg class="a" style="left:232px;top:140px" width="16" height="16" viewBox="0 0 16 16"><circle cx="6.8" cy="6.8" r="5" stroke="#8e939b" stroke-width="1.3" fill="none"/><path d="M10.5 10.5l4 4" stroke="#8e939b" stroke-width="1.3"/></svg>
<div class="btn" style="left:265px;top:133px;width:120px;height:32px;line-height:32px">Erweiterte <u>S</u>uche</div>
<div class="btn" style="left:397px;top:133px;width:120px;height:32px;line-height:32px">Volltextsuche</div>
<div class="btn" style="left:525px;top:133px;width:120px;height:32px;line-height:32px">Kennzeichen</div>
<div class="a nw" style="left:1274px;top:141px;font-size:12px;line-height:16px;color:#222">Ansicht:</div>
<div class="panel" style="left:32px;top:177px;width:166px;height:299px"></div>
<svg class="a" style="left:38px;top:179px" width="10" height="14" viewBox="0 0 10 14"><path d="M7 2L2 7l5 5" stroke="#8d94a3" stroke-width="1.2" fill="none"/></svg>
<div class="a nw" style="left:54px;top:196px;font-size:12px;line-height:16px;color:#1b1b1b">Favoriten</div>
<svg class="a" style="left:38px;top:197px" width="14" height="12" viewBox="0 0 14 12"><path d="M1 2h12M3.5 6h7M5.5 10h3" stroke="#9da1a8" stroke-width="1.3"/></svg>
<div class="a nw" style="left:54px;top:216px;font-size:12px;line-height:16px;color:#1b1b1b">Einmalartikel</div>
<svg class="a" style="left:38px;top:217px" width="14" height="12" viewBox="0 0 14 12"><path d="M1 2h12M3.5 6h7M5.5 10h3" stroke="#9da1a8" stroke-width="1.3"/></svg>
<div class="a nw" style="left:54px;top:236px;font-size:12px;line-height:16px;color:#1b1b1b">Webshop-Artikel</div>
<svg class="a" style="left:38px;top:237px" width="14" height="12" viewBox="0 0 14 12"><path d="M1 2h12M3.5 6h7M5.5 10h3" stroke="#9da1a8" stroke-width="1.3"/></svg>
<div class="a nw" style="left:54px;top:256px;font-size:12px;line-height:16px;color:#1b1b1b">Kurzbezeichnung</div>
<svg class="a" style="left:42px;top:257px" width="8" height="12" viewBox="0 0 8 12"><path d="M2 2l4 4-4 4" stroke="#777c84" stroke-width="1.1" fill="none"/></svg>
<div class="a nw" style="left:54px;top:276px;font-size:12px;line-height:16px;color:#1b1b1b">Artikelgruppe</div>
<svg class="a" style="left:42px;top:277px" width="8" height="12" viewBox="0 0 8 12"><path d="M2 2l4 4-4 4" stroke="#777c84" stroke-width="1.1" fill="none"/></svg>
<div class="a nw" style="left:54px;top:296px;font-size:12px;line-height:16px;color:#1b1b1b">ABC-Klasse</div>
<svg class="a" style="left:42px;top:297px" width="8" height="12" viewBox="0 0 8 12"><path d="M2 2l4 4-4 4" stroke="#777c84" stroke-width="1.1" fill="none"/></svg>
<div class="a nw" style="left:54px;top:316px;font-size:12px;line-height:16px;color:#1b1b1b">Hauptlieferant</div>
<svg class="a" style="left:42px;top:317px" width="8" height="12" viewBox="0 0 8 12"><path d="M2 2l4 4-4 4" stroke="#777c84" stroke-width="1.1" fill="none"/></svg>
<div class="a nw" style="left:54px;top:336px;font-size:12px;line-height:16px;color:#1b1b1b">Artikeltyp</div>
<svg class="a" style="left:42px;top:337px" width="8" height="12" viewBox="0 0 8 12"><path d="M2 2l4 4-4 4" stroke="#777c84" stroke-width="1.1" fill="none"/></svg>
<div class="a nw" style="left:54px;top:356px;font-size:12px;line-height:16px;color:#1b1b1b">Artikelkatalog</div>
<svg class="a" style="left:42px;top:357px" width="8" height="12" viewBox="0 0 8 12"><path d="M2 2l4 4-4 4" stroke="#777c84" stroke-width="1.1" fill="none"/></svg>
<div class="a nw" style="left:54px;top:376px;font-size:12px;line-height:16px;color:#1b1b1b">Artikelstatus</div>
<svg class="a" style="left:42px;top:377px" width="8" height="12" viewBox="0 0 8 12"><path d="M2 2l4 4-4 4" stroke="#777c84" stroke-width="1.1" fill="none"/></svg>
<div class="a nw" style="left:54px;top:396px;font-size:12px;line-height:16px;color:#1b1b1b">Dispositionskennzeichen</div>
<svg class="a" style="left:42px;top:397px" width="8" height="12" viewBox="0 0 8 12"><path d="M2 2l4 4-4 4" stroke="#777c84" stroke-width="1.1" fill="none"/></svg>
<div class="a nw" style="left:54px;top:416px;font-size:12px;line-height:16px;color:#1b1b1b">Dimensionen</div>
<svg class="a" style="left:42px;top:417px" width="8" height="12" viewBox="0 0 8 12"><path d="M2 2l4 4-4 4" stroke="#777c84" stroke-width="1.1" fill="none"/></svg>
<div class="a nw" style="left:54px;top:436px;font-size:12px;line-height:16px;color:#1b1b1b">Hersteller</div>
<svg class="a" style="left:42px;top:437px" width="8" height="12" viewBox="0 0 8 12"><path d="M2 2l4 4-4 4" stroke="#777c84" stroke-width="1.1" fill="none"/></svg>
<div class="a" style="left:205px;top:177px;width:1127px;height:299px;background:#fff;border-radius:8px 0 0 3px"></div>
<div class="a" style="left:205px;top:177px;width:1127px;height:30px;background:#f0f0f0;border-radius:8px 0 0 0"></div>
<div class="a nw" style="left:217px;top:184px;font-size:12px;line-height:16px;color:#111;font-weight:bold">Artikelnummer</div>
<svg class="a" style="left:305px;top:184px" width="9" height="14" viewBox="0 0 9 14"><path d="M1.5 9L4.5 6l3 3" stroke="#9a9ea5" stroke-width="1.1" fill="none"/></svg>
<svg class="a" style="left:319px;top:185px" width="13" height="13" viewBox="0 0 13 13"><path d="M1 1.5h11L7.8 6.5v5L5.2 10V6.5z" stroke="#8e939b" stroke-width="1.1" fill="none" stroke-linejoin="round"/></svg>
<svg class="a" style="left:255px;top:179px" width="18" height="19" viewBox="0 0 18 19"><path d="M1 1.5h14L9.5 7.8v4.5L7 11V7.8z" stroke="#a3a7ad" stroke-width="1.1" fill="none" stroke-linejoin="round"/><circle cx="12.5" cy="13" r="3.8" stroke="#a3a7ad" stroke-width="1.1" fill="rgba(255,255,255,.3)"/></svg>
<div class="a nw" style="left:375px;top:184px;font-size:12px;line-height:16px;color:#111;font-weight:bold">Dies ist eine abweichende Bezeichnun</div>
<svg class="a" style="left:598px;top:184px" width="9" height="14" viewBox="0 0 9 14"><path d="M1.5 5L4.5 2l3 3M1.5 9l3 3 3-3" stroke="#9a9ea5" stroke-width="1.1" fill="none"/></svg>
<svg class="a" style="left:612px;top:185px" width="13" height="13" viewBox="0 0 13 13"><path d="M1 1.5h11L7.8 6.5v5L5.2 10V6.5z" stroke="#8e939b" stroke-width="1.1" fill="none" stroke-linejoin="round"/></svg>
<div class="a nw" style="left:632px;top:184px;font-size:12px;line-height:16px;color:#111;font-weight:bold">Bezeichnung</div>
<svg class="a" style="left:710px;top:184px" width="9" height="14" viewBox="0 0 9 14"><path d="M1.5 5L4.5 2l3 3M1.5 9l3 3 3-3" stroke="#9a9ea5" stroke-width="1.1" fill="none"/></svg>
<svg class="a" style="left:724px;top:185px" width="13" height="13" viewBox="0 0 13 13"><path d="M1 1.5h11L7.8 6.5v5L5.2 10V6.5z" stroke="#8e939b" stroke-width="1.1" fill="none" stroke-linejoin="round"/></svg>
<div class="a nw" style="left:846px;top:184px;font-size:12px;line-height:16px;color:#111;font-weight:bold">Konto VK</div>
<svg class="a" style="left:904px;top:184px" width="9" height="14" viewBox="0 0 9 14"><path d="M1.5 5L4.5 2l3 3M1.5 9l3 3 3-3" stroke="#9a9ea5" stroke-width="1.1" fill="none"/></svg>
<svg class="a" style="left:918px;top:185px" width="13" height="13" viewBox="0 0 13 13"><path d="M1 1.5h11L7.8 6.5v5L5.2 10V6.5z" stroke="#8e939b" stroke-width="1.1" fill="none" stroke-linejoin="round"/></svg>
<div class="a nw" style="left:1045px;top:184px;font-size:12px;line-height:16px;color:#111;font-weight:bold">Variantenpreise</div>
<svg class="a" style="left:1139px;top:184px" width="9" height="14" viewBox="0 0 9 14"><path d="M1.5 5L4.5 2l3 3M1.5 9l3 3 3-3" stroke="#9a9ea5" stroke-width="1.1" fill="none"/></svg>
<svg class="a" style="left:1152px;top:185px" width="13" height="13" viewBox="0 0 13 13"><path d="M1 1.5h11L7.8 6.5v5L5.2 10V6.5z" stroke="#8e939b" stroke-width="1.1" fill="none" stroke-linejoin="round"/></svg>
<div class="a nw" style="left:1245px;top:184px;font-size:12px;line-height:16px;color:#111;font-weight:bold">Mindestverkaufsmenge</div>
<div class="a nw" style="left:217px;top:221px;font-size:12px;line-height:16px;color:#111">A000001</div>
<div class="a nw" style="left:375px;top:221px;font-size:12px;line-height:16px;color:#111">Einmalartikel</div>
<div class="a nw" style="left:632px;top:215px;font-size:12px;line-height:14px;color:#111">Dieser Artikel dient als "Sammelartikel"<br>für alle</div>
<div class="a" style="left:215px;top:251px;width:1200px;height:30px;background:#f8e6e6"></div>
<div class="a nw" style="left:217px;top:258px;font-size:12px;line-height:16px;color:#111">A000002</div>
<div class="a nw" style="left:375px;top:258px;font-size:12px;line-height:16px;color:#111">Hammer (Handelsartikel, Staffelpreise)</div>
<div class="a nw" style="left:632px;top:258px;font-size:12px;line-height:16px;color:#111">Stahlhammer 4,5 kg</div>
<div class="a nw" style="left:217px;top:288px;font-size:12px;line-height:16px;color:#111">A000003</div>
<div class="a nw" style="left:375px;top:288px;font-size:12px;line-height:16px;color:#111">Kopierpapier (Eigenbedarf)</div>
<div class="a nw" style="left:632px;top:288px;font-size:12px;line-height:16px;color:#111">Kopierpapier, weiß, DIN A4, 80g/qm</div>
<div class="a" style="left:215px;top:311px;width:1200px;height:44px;background:#f5f7fb"></div>
<div class="a nw" style="left:217px;top:325px;font-size:12px;line-height:16px;color:#111">A000004</div>
<div class="a nw" style="left:375px;top:325px;font-size:12px;line-height:16px;color:#111">Beratung (Dienstleistung; Normalsatz Leistung)</div>
<div class="a nw" style="left:632px;top:319px;font-size:12px;line-height:14px;color:#111">Unsere individuelle Beratung bei Ihnen<br>vor Ort</div>
<div class="a nw" style="left:217px;top:362px;font-size:12px;line-height:16px;color:#111">A000005</div>
<div class="a nw" style="left:375px;top:362px;font-size:12px;line-height:16px;color:#111">Giesskanne (Eigenfertigung)</div>
<div class="a nw" style="left:632px;top:362px;font-size:12px;line-height:16px;color:#111">Giesskanne "Lena" - hellblau</div>
<div class="a" style="left:215px;top:385px;width:1200px;height:44px;background:#f5f7fb"></div>
<div class="a nw" style="left:217px;top:399px;font-size:12px;line-height:16px;color:#111">A000006</div>
<div class="a nw" style="left:375px;top:399px;font-size:12px;line-height:16px;color:#111">Giesskannengriff (Rohstoff)</div>
<div class="a nw" style="left:632px;top:393px;font-size:12px;line-height:14px;color:#111">Giesskannengriff für Giesskanne<br>"Lena" - hellblau</div>
<div class="a nw" style="left:217px;top:436px;font-size:12px;line-height:16px;color:#111">A000007</div>
<div class="a nw" style="left:375px;top:436px;font-size:12px;line-height:16px;color:#111">Hustensaft (steuerfrei)</div>
<div class="a nw" style="left:632px;top:436px;font-size:12px;line-height:16px;color:#111">Wacholder - Hustensaft; 0,5 l</div>
<svg class="a" style="left:216px;top:458px" width="14" height="14" viewBox="0 0 14 14"><path d="M12 7a5 5 0 1 1-1.5-3.6M10.8 1v2.8H8" stroke="#7d828b" stroke-width="1.2" fill="none"/></svg>
<svg class="a" style="left:236px;top:458px" width="14" height="14" viewBox="0 0 14 14"><path d="M3.5 5V1.5h7V5M3.5 10.5H1.5V5h11v5.5h-2M3.5 8.5h7v4h-7z" stroke="#7d828b" stroke-width="1.2" fill="none" stroke-linejoin="round"/></svg>
<svg class="a" style="left:257px;top:458px" width="14" height="14" viewBox="0 0 14 14"><circle cx="7" cy="7" r="2" stroke="#9a9ea5" stroke-width="1.1" fill="none"/><path d="M6 1h2l.4 1.6 1.4.6 1.4-.9 1.4 1.4-.9 1.4.6 1.4L13 6v2l-1.6.4-.6 1.4.9 1.4-1.4 1.4-1.4-.9-1.4.6L8 13H6l-.4-1.6-1.4-.6-1.4.9-1.4-1.4.9-1.4-.6-1.4L1 8V6l1.6-.4.6-1.4-.9-1.4 1.4-1.4 1.4.9 1.4-.6z" stroke="#9a9ea5" stroke-width="1.1" fill="none" stroke-linejoin="round"/></svg>
<div class="a nw" style="left:293px;top:458px;font-size:11px;line-height:14px;color:#555;font-style:italic">Datensätze 1 - 50 von 377</div>
<div class="a" style="left:27px;top:479px;width:1300px;height:0;border-top:1px dotted #e8eef3"></div>
<div class="btn" style="left:39px;top:488px;width:120px;height:32px;line-height:32px"><svg style="vertical-align:-3px;margin-right:4px" width="14" height="14" viewBox="0 0 14 14"><circle cx="7" cy="7" r="5.8" stroke="#fff" stroke-width="1.3" fill="none"/><path d="M7 4v6M4 7h6" stroke="#fff" stroke-width="1.3"/></svg><u>N</u>eu</div>
<div class="btn" style="left:174px;top:488px;width:120px;height:32px;line-height:32px"><svg style="vertical-align:-2px;margin-right:5px" width="13" height="13" viewBox="0 0 13 13"><path d="M1.5 1.5h8l2 2v8h-10z M4 1.5v3h4.5v-3 M3.5 11.5v-4h6v4" stroke="#fff" stroke-width="1.2" fill="none" stroke-linejoin="round"/></svg>Sp<u>e</u>ichern</div>
<div class="btn" style="left:309px;top:488px;width:120px;height:32px;line-height:32px"><svg style="vertical-align:-2px;margin-right:5px" width="14" height="14" viewBox="0 0 14 14"><rect x="4.5" y="1.5" width="8" height="8" rx="1" stroke="#fff" stroke-width="1.2" fill="none"/><path d="M3 4.5H1.5v8h8V11" stroke="#fff" stroke-width="1.2" fill="none"/></svg>Kopieren</div>
<div class="btn" style="left:444px;top:488px;width:120px;height:32px;line-height:32px"><svg style="vertical-align:-2px;margin-right:5px" width="12" height="14" viewBox="0 0 12 14"><path d="M1 3h10M4 3V1.5h4V3M2.2 3l.8 9.5h6l.8-9.5M5 5.5v5M7 5.5v5" stroke="#fff" stroke-width="1.2" fill="none"/></svg>Löschen</div>
<div class="btn" style="left:579px;top:488px;width:120px;height:32px;line-height:32px"><svg style="vertical-align:-3px;margin-right:4px" width="13" height="15" viewBox="0 0 13 15"><rect x="1.5" y="2.5" width="10" height="11.5" rx="1.5" stroke="#fff" stroke-width="1.2" fill="none"/><path d="M4.5 1h4v2.5h-4z M4 8.5l1.8 1.8L9.2 7" stroke="#fff" stroke-width="1.2" fill="none"/></svg><u>M</u>emotext</div>
<div class="a" style="left:33px;top:535px;width:1300px;height:40px;background:#fff;border-radius:8px 0 0 8px"></div>
<div class="a nw" style="left:53px;top:546px;font-size:12px;line-height:16px;color:#3e4e6c;font-weight:bold">Übersicht</div>
<div class="a nw" style="left:132px;top:546px;font-size:12px;line-height:16px;color:#5a5e66">Grundlagen</div>
<div class="a" style="left:119px;top:546px;width:1px;height:17px;background:#eceef0"></div>
<div class="a nw" style="left:219px;top:546px;font-size:12px;line-height:16px;color:#5a5e66">Einkauf/Verkauf</div>
<div class="a" style="left:206px;top:546px;width:1px;height:17px;background:#eceef0"></div>
<div class="a nw" style="left:327px;top:546px;font-size:12px;line-height:16px;color:#5a5e66">Preise</div>
<div class="a" style="left:314px;top:546px;width:1px;height:17px;background:#eceef0"></div>
<div class="a nw" style="left:385px;top:546px;font-size:12px;line-height:16px;color:#5a5e66">Rabatte</div>
<div class="a" style="left:372px;top:546px;width:1px;height:17px;background:#eceef0"></div>
<div class="a nw" style="left:451px;top:546px;font-size:12px;line-height:16px;color:#5a5e66">Dokumente</div>
<div class="a" style="left:438px;top:546px;width:1px;height:17px;background:#eceef0"></div>
<div class="a nw" style="left:536px;top:546px;font-size:12px;line-height:16px;color:#5a5e66">Bestände</div>
<div class="a" style="left:523px;top:546px;width:1px;height:17px;background:#eceef0"></div>
<div class="a nw" style="left:611px;top:546px;font-size:12px;line-height:16px;color:#5a5e66">Dimensionen</div>
<div class="a" style="left:598px;top:546px;width:1px;height:17px;background:#eceef0"></div>
<div class="a nw" style="left:705px;top:546px;font-size:12px;line-height:16px;color:#5a5e66">Kennzeichen</div>
<div class="a" style="left:692px;top:546px;width:1px;height:17px;background:#eceef0"></div>
<div class="a nw" style="left:799px;top:546px;font-size:12px;line-height:16px;color:#5a5e66">Kataloge</div>
<div class="a" style="left:786px;top:546px;width:1px;height:17px;background:#eceef0"></div>
<div class="a nw" style="left:870px;top:546px;font-size:12px;line-height:16px;color:#5a5e66">Kosten</div>
<div class="a" style="left:857px;top:546px;width:1px;height:17px;background:#eceef0"></div>
<div class="a nw" style="left:931px;top:546px;font-size:12px;line-height:16px;color:#5a5e66">Gefahrgut</div>
<div class="a" style="left:918px;top:546px;width:1px;height:17px;background:#eceef0"></div>
<div class="a nw" style="left:1008px;top:546px;font-size:12px;line-height:16px;color:#5a5e66">Intrastat</div>
<div class="a" style="left:995px;top:546px;width:1px;height:17px;background:#eceef0"></div>
<div class="a nw" style="left:1076px;top:546px;font-size:12px;line-height:16px;color:#5a5e66">Historie</div>
<div class="a" style="left:1063px;top:546px;width:1px;height:17px;background:#eceef0"></div>
<div class="a nw" style="left:1141px;top:546px;font-size:12px;line-height:16px;color:#5a5e66">Shopzuordnung</div>
<div class="a" style="left:1128px;top:546px;width:1px;height:17px;background:#eceef0"></div>
<div class="a" style="left:43px;top:572px;width:77px;height:3px;background:#2f4d78"></div>
<div class="a" style="left:33px;top:585px;width:1300px;height:247px;background:#fff;border-radius:8px 0 0 8px"></div>
<svg class="a" style="left:47px;top:590px" width="130.0" height="130.0" viewBox="0 0 130 130">
<defs>
<linearGradient id="hpg1" x1="0" y1="0" x2="0.3" y2="1"><stop offset="0" stop-color="#5f6058"/><stop offset="0.5" stop-color="#2f302b"/><stop offset="1" stop-color="#4a4b43"/></linearGradient>
<linearGradient id="hpg2" x1="0" y1="0" x2="1" y2="0.2"><stop offset="0" stop-color="#b5b6ae"/><stop offset="0.3" stop-color="#e4e4de"/><stop offset="0.55" stop-color="#8a8b82"/><stop offset="0.8" stop-color="#c6c6bf"/><stop offset="1" stop-color="#5d5e55"/></linearGradient>
<linearGradient id="hpg3" x1="0" y1="0" x2="1" y2="1"><stop offset="0" stop-color="#e6e6e0"/><stop offset="1" stop-color="#8a8b82"/></linearGradient>
</defs>
<path d="M11 13 Q5 20 10 27 L55 53 L61 40 L19 11 Q15 9 11 13 Z" fill="url(#hpg1)"/>
<path d="M55 52 L61 41 L86 57 L81 68 Z" fill="url(#hpg3)"/>
<path d="M72 22 Q76 19 81 20 Q88 30 92 40 Q90 28 84 18 Q89 16 94 18 Q108 38 111 62 L113 86 L109 93 L113 102 L112 116 Q103 120 94 117 L92 104 L95 93 L93 86 Q88 72 80 67 Q78 42 72 22 Z" fill="url(#hpg2)"/>
<path d="M72 22 Q76 19 81 20 Q88 30 92 40 L96 52 Q90 45 84 42 Q78 30 72 22 Z" fill="#2f302b"/>
<path d="M84 18 Q89 16 94 18 Q106 36 109 55 Q104 48 98 44 Q92 30 84 18 Z" fill="#2f302b"/>
</svg>
<div class="a nw" style="left:183px;top:598px;font-size:16px;line-height:19px;color:#333">A000002, Hammer (Handelsartikel, Staffelpreise)</div>
<div class="a nw" style="left:183px;top:632px;font-size:12px;line-height:16px;color:#333">Stahlhammer 4,5 kg</div>
<div class="a nw" style="left:183px;top:664px;font-size:12px;line-height:16px;color:#333">Handelsartikel</div>
<div class="a nw" style="left:183px;top:680px;font-size:12px;line-height:16px;color:#333">Gruppe: Werkzeuge</div>
<div class="a nw" style="left:183px;top:696px;font-size:12px;line-height:16px;color:#333">EAN: 445566778899</div>
<div class="a nw" style="left:183px;top:728px;font-size:12px;line-height:16px;color:#333">Lagerbestand: 13.117 Stück</div>
<div class="a nw" style="left:183px;top:744px;font-size:12px;line-height:16px;color:#333">Verfügbar: 713 Stück</div>
<div class="a nw" style="left:183px;top:760px;font-size:12px;line-height:16px;color:#333">Beschaffungszeit: 5 Tage</div>
<div class="a nw" style="left:183px;top:792px;font-size:12px;line-height:16px;color:#333">Hauptlieferant: Toolcompany, Eschborn</div>
<div class="a" style="left:0;top:913px;width:1322px;height:10px;background:#fff"></div>
<div class="a" style="left:3px;top:915px;width:1060px;height:6px;border-radius:3px;background:#d3d3d3"></div>
</div>
<!--/POP-->

<!--OV-->
<svg class="a" style="left:0;top:0;pointer-events:none" width="1922" height="976" viewBox="0 0 1922 976">
 <defs><filter id="ash" x="-20%" y="-20%" width="140%" height="140%"><feDropShadow dx="1" dy="2" stdDeviation="1.5" flood-color="#000" flood-opacity=".35"/></filter></defs>
 <g filter="url(#ash)">
 <path d="M442 40 L508.5 122.5" stroke="#f53b3b" stroke-width="3" fill="none"/>
 <path d="M513.5 129.5 L504 125.5 L511.5 119 Z" fill="#f53b3b" stroke="#f53b3b" stroke-width="1" stroke-linejoin="round"/>
 </g>
</svg>
<div class="a" style="left:0;top:0;width:1922px;height:976px;border:1px solid #3a95e4;border-bottom-width:2px;pointer-events:none"></div>
<!--/OV-->
</body></html>
